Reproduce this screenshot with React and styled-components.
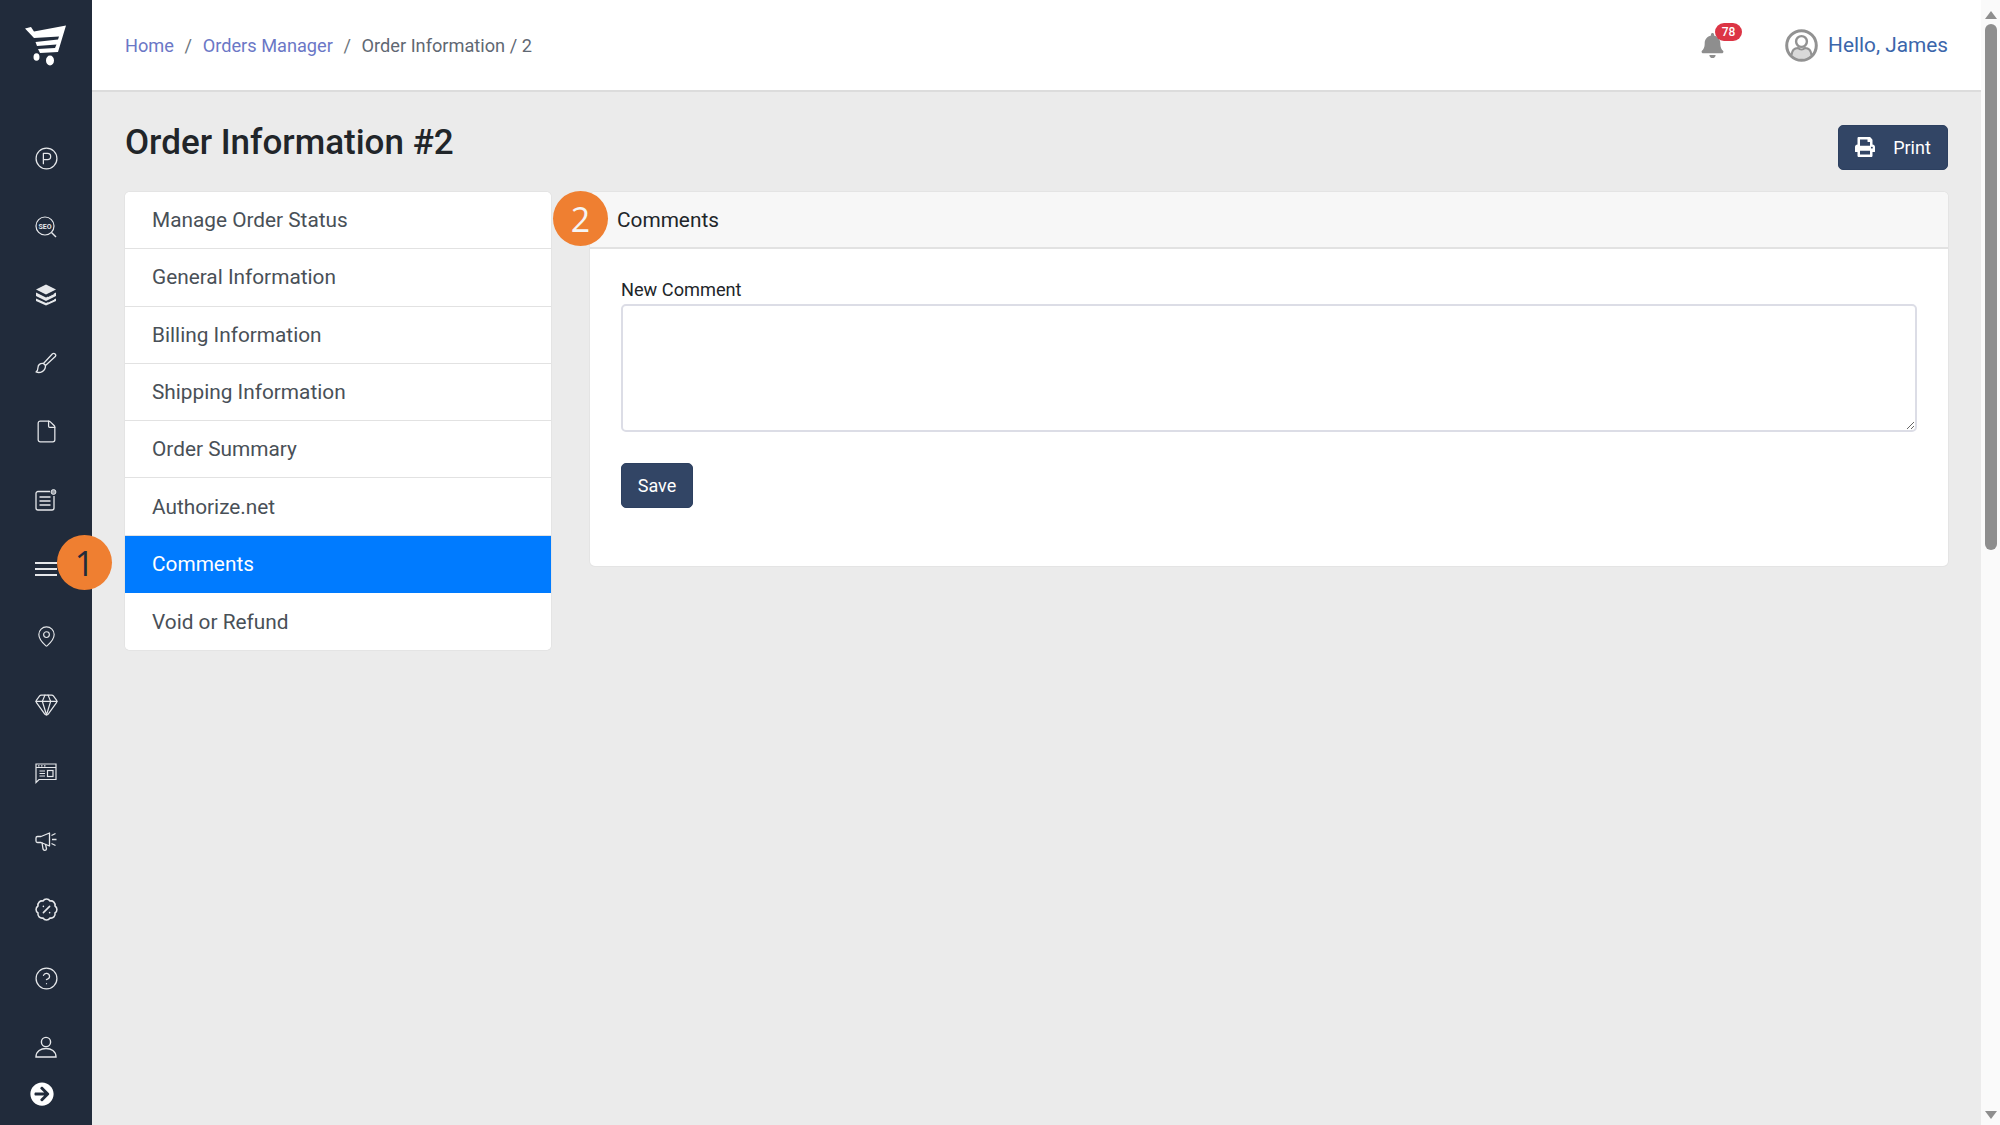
import styled, { createGlobalStyle } from "styled-components";
import { CircleParking, File, MapPin, Gem, BadgePercent, CircleHelp } from "lucide-react";
import { FaArrowCircleRight, FaBell, FaPrint } from "react-icons/fa";

const GlobalStyle = createGlobalStyle`
  html, body {
    margin: 0;
    padding: 0;
    overflow: hidden;
  }
  body {
    font-family: Roboto, "Liberation Sans", sans-serif;
    color: #212529;
  }
  * {
    box-sizing: border-box;
  }
`;

const Page = styled.div`
  display: flex;
  width: 2000px;
  height: 1125px;
  overflow: hidden;
  background: #ebebeb;
`;

const Sidebar = styled.aside`
  position: relative;
  flex: 0 0 92px;
  display: flex;
  flex-direction: column;
  align-items: center;
  background: #212b3b;
  color: #e6e8eb;
`;

const Logo = styled.div`
  height: 90px;
  display: flex;
  align-items: center;
  justify-content: center;
  width: 100%;
`;

const SideNav = styled.nav`
  display: flex;
  flex-direction: column;
  margin-top: 34px;
`;

const SideItem = styled.div`
  height: 68.35px;
  width: 92px;
  display: flex;
  align-items: center;
  justify-content: center;
  color: #e6e8eb;
`;

const Collapse = styled.div`
  display: flex;
  color: #fff;
  margin: 1px 8px 0 0;
`;

const Main = styled.div`
  position: relative;
  flex: 1;
  min-width: 0;
  display: flex;
  flex-direction: column;
`;

const Header = styled.header`
  height: 92px;
  flex: none;
  background: #fff;
  border-bottom: 2px solid #dcdcdc;
  display: flex;
  align-items: center;
  justify-content: space-between;
  padding: 0 33px;
`;

const Crumbs = styled.div`
  display: flex;
  align-items: center;
  font-size: 18.2px;
  color: #5f6873;
`;

const Crumb = styled.a`
  color: #6b77c6;
  text-decoration: none;
`;

const Slash = styled.span`
  margin: 0 10.6px;
  color: #6c757d;
`;

const HeaderRight = styled.div`
  display: flex;
  align-items: center;
`;

const Bell = styled.div`
  position: relative;
  display: flex;
  color: #8e8e8e;
  margin: 0 60px 0 0;
`;

const CountBadge = styled.span`
  position: absolute;
  top: -10px;
  left: 15px;
  width: 27px;
  height: 18px;
  border-radius: 9px;
  background: #dc3545;
  color: #fff;
  font-size: 12px;
  font-weight: 500;
  display: flex;
  align-items: center;
  justify-content: center;
`;

const Hello = styled.div`
  display: flex;
  align-items: center;
  gap: 10px;
  font-size: 20.8px;
  color: #3b66ab;
`;

const Content = styled.main`
  padding: 26px 33px 0;
`;

const TitleRow = styled.div`
  display: flex;
  justify-content: space-between;
  align-items: flex-start;
  height: 74px;
`;

const Title = styled.h1`
  margin: 1px 0 0;
  font-size: 35px;
  line-height: 48px;
  font-weight: 500;
  color: #212529;
`;

const Button = styled.button`
  display: flex;
  align-items: center;
  justify-content: center;
  border: 1px solid #2d4060;
  border-radius: 5px;
  background: #324565;
  color: #fff;
  font-family: inherit;
  font-size: 18px;
  height: 45px;
  padding: 0 16px 1px;
`;

const PrintButton = styled(Button)`
  gap: 18px;
  width: 110px;
  margin-top: 7px;
`;

const Columns = styled.div`
  display: flex;
  align-items: flex-start;
  gap: 39px;
`;

const TabList = styled.ul`
  flex: 0 0 426px;
  margin: 0;
  padding: 0;
  list-style: none;
  background: #fff;
  box-shadow: 0 0 0 1px #e4e4e4;
  border-radius: 5px;
  overflow: hidden;
`;

const Tab = styled.li`
  height: 57.3px;
  display: flex;
  align-items: center;
  padding-left: 27px;
  font-size: 20.8px;
  color: ${(p) => (p.$active ? "#fff" : "#495057")};
  background: ${(p) => (p.$active ? "#007bff" : "#fff")};
  border-bottom: 1px solid ${(p) => (p.$active ? "#007bff" : "#e2e2e2")};
  &:last-child {
    border-bottom: none;
  }
`;

const Card = styled.section`
  flex: 1;
  background: #fff;
  box-shadow: 0 0 0 1px #e4e4e4;
  border-radius: 5px;
  overflow: hidden;
`;

const CardHeader = styled.div`
  height: 57px;
  display: flex;
  align-items: center;
  padding-left: 27px;
  background: #f7f7f7;
  border-bottom: 2px solid #e2e2e2;
  font-size: 20.8px;
  color: #212529;
`;

const CardBody = styled.div`
  padding: 28px 31px 58px;
`;

const Label = styled.label`
  display: block;
  font-size: 18.2px;
  line-height: 25px;
  color: #212529;
`;

const Comment = styled.textarea`
  display: block;
  width: 100%;
  height: 128px;
  margin: 2px 0 31px;
  border: 2px solid #dcdde6;
  border-radius: 5px;
  background: #fff;
  outline: none;
`;

const SaveButton = styled(Button)`
  width: 72px;
  padding: 0 0 1px;
`;

const Step = styled.span`
  position: absolute;
  width: 55px;
  height: 55px;
  border-radius: 50%;
  background: #ef7f31;
  color: ${(p) => p.$ink};
  font-family: "Open Sans", sans-serif;
  font-size: 34px;
  display: flex;
  align-items: center;
  justify-content: center;
  z-index: 5;
`;

const StepOne = styled(Step)`
  left: 57px;
  top: 535px;
`;

const StepTwo = styled(Step)`
  left: 553px;
  top: 191px;
`;

const ScrollTrack = styled.div`
  flex: 0 0 19px;
  display: flex;
  flex-direction: column;
  align-items: center;
  background: #fafafa;
`;

const Arrow = styled.span`
  flex: none;
  margin: ${(p) => (p.$down ? "auto 0 6px" : "11px 0 5px")};
  width: 0;
  height: 0;
  border-left: 6px solid transparent;
  border-right: 6px solid transparent;
  border-bottom: ${(p) => (p.$down ? "none" : "8px solid #8e8e8e")};
  border-top: ${(p) => (p.$down ? "8px solid #8e8e8e" : "none")};
`;

const Thumb = styled.div`
  width: 12px;
  height: 526px;
  border-radius: 6px;
  background: #8e8e8e;
`;

const CartLogo = () => (
  <svg width="42" height="42" viewBox="0 0 42 42" fill="#fff">
    <path d="M0 4.5 L6 3 L9 7.5 L41 1.5 L33 28 L15 29 L13 25 L30 24 L31.5 20.5 L12 22 L10.5 18 L33 15.5 L34 12.5 L9 14 Z" />
    <ellipse cx="11.5" cy="33" rx="3" ry="3.8" />
    <ellipse cx="25" cy="36.5" rx="4" ry="5" />
  </svg>
);

const SeoIcon = () => (
  <svg width="22" height="22" viewBox="0 0 22 22" fill="none" stroke="currentColor">
    <circle cx="10" cy="10" r="9" strokeWidth="1.2" />
    <path d="M16.5 16.5 L21 21" strokeWidth="1.4" />
    <text x="10" y="12.5" textAnchor="middle" fontFamily="Roboto" fontSize="7" fontWeight="700" fill="currentColor" stroke="none">
      SEO
    </text>
  </svg>
);

const StackIcon = () => (
  <svg width="22" height="22" viewBox="0 0 22 22" fill="currentColor">
    <path d="M11 0.5 L21 5.5 L11 10.5 L1 5.5 Z" />
    <path d="M1 8.5 L11 13.5 L21 8.5 V12 L11 17 L1 12 Z" />
    <path d="M1 14.5 L11 19 L21 14.5 V17 L11 21.5 L1 17 Z" />
    <path d="M13 12.5 L19 9.6 M13 18 L19 15.2" stroke="#212b3b" strokeWidth="1" />
  </svg>
);

const BrushIcon = () => (
  <svg width="22" height="22" viewBox="0 0 22 22" fill="none" stroke="currentColor" strokeWidth="1.3" strokeLinejoin="round">
    <path d="M8.5 11.5 L17.5 1.8 a2 2 0 0 1 2.8 2.8 L10.5 13.5 Z" />
    <path d="M8.5 11.5 C5 11 3 13 3 15.5 C3 17.5 2.5 19 1 20 C5 21.5 10.5 19.5 10.5 13.5" />
  </svg>
);

const NoteIcon = () => (
  <svg width="22" height="22" viewBox="0 0 22 22" fill="none" stroke="currentColor" strokeWidth="1.3">
    <path d="M15 2.5 H3 a2 2 0 0 0 -2 2 V19 a2 2 0 0 0 2 2 H17 a2 2 0 0 0 2 -2 V7" />
    <path d="M4.5 8 H15.5 M4.5 12 H15.5 M4.5 16 H15.5" strokeWidth="1.5" />
    <circle cx="18.5" cy="3" r="2.4" fill="#9aa0a8" strokeWidth="1" />
  </svg>
);

const BarsIcon = () => (
  <svg width="22" height="18" viewBox="0 0 22 18" fill="none" stroke="currentColor" strokeWidth="1.8">
    <path d="M0 4 H22 M0 10 H22 M0 16 H22" />
  </svg>
);

const PageIcon = () => (
  <svg width="22" height="22" viewBox="0 0 22 22" fill="none" stroke="currentColor" strokeWidth="1.2">
    <path d="M1 2 H21 V17.5 H4 L1 20.5 Z" />
    <path d="M1 5.5 H21 M4.5 9 H10 M4.5 11.5 H10 M4.5 14 H10" />
    <rect x="12.5" y="8.5" width="5.5" height="6" />
    <path d="M3 3.8 H4.5 M6 3.8 H7.5 M9 3.8 H10.5" />
  </svg>
);

const HornIcon = () => (
  <svg width="22" height="22" viewBox="0 0 22 22" fill="none" stroke="currentColor" strokeWidth="1.3" strokeLinejoin="round">
    <path d="M14.5 2 L6 5.5 H2.5 A1.5 1.5 0 0 0 1 7 V10 A1.5 1.5 0 0 0 2.5 11.5 H6 L14.5 15 Z" />
    <path d="M7 11.5 L8 18 a1.8 1.8 0 0 0 3.5 -0.2 L10.5 13" />
    <path d="M17 8.5 H21.5 M16.5 4.5 L20.5 2.5 M16.5 12.5 L20.5 14.5" />
  </svg>
);

const PersonIcon = () => (
  <svg width="22" height="22" viewBox="0 0 22 22" fill="none" stroke="currentColor" strokeWidth="1.4">
    <circle cx="11" cy="6" r="4.6" />
    <path d="M1 21 H21 C21 15 16 12.5 11 12.5 C6 12.5 1 15 1 21 Z" />
  </svg>
);

const AvatarIcon = () => (
  <svg width="33" height="33" viewBox="0 0 33 33">
    <circle cx="16.5" cy="16.5" r="14.8" fill="#fff" stroke="#929292" strokeWidth="3" />
    <circle cx="16.5" cy="12.5" r="5.4" fill="#fff" stroke="#929292" strokeWidth="2.4" />
    <path d="M6 26 C7 20.5 11 19.5 13 19.5 C15 21 18 21 20 19.5 C22 19.5 26 20.5 27 26 L27 27 C22 31 11 31 6 27 Z" fill="#929292" opacity="0.35" />
    <path d="M6.5 26 C7 21 10 19 13 19 C15 20.8 18 20.8 20 19 C23 19 26 21 26.5 26" fill="none" stroke="#929292" strokeWidth="2.2" />
  </svg>
);

const lucideProps = { size: 25, strokeWidth: 1.2 };

const sideIcons = [
  <CircleParking key="parking" {...lucideProps} />,
  <SeoIcon key="seo" />,
  <StackIcon key="stack" />,
  <BrushIcon key="brush" />,
  <File key="file" {...lucideProps} />,
  <NoteIcon key="note" />,
  <BarsIcon key="bars" />,
  <MapPin key="pin" size={23} strokeWidth={1.2} />,
  <Gem key="gem" {...lucideProps} />,
  <PageIcon key="page" />,
  <HornIcon key="megaphone" />,
  <BadgePercent key="percent" size={25} strokeWidth={1.5} />,
  <CircleHelp key="help" {...lucideProps} />,
  <PersonIcon key="person" />,
];

const tabs = [
  "Manage Order Status",
  "General Information",
  "Billing Information",
  "Shipping Information",
  "Order Summary",
  "Authorize.net",
  "Comments",
  "Void or Refund",
];

export default function App() {
  return (
    <Page>
      <GlobalStyle />
      <Sidebar>
        <Logo>
          <CartLogo />
        </Logo>
        <SideNav>
          {sideIcons.map((icon) => (
            <SideItem key={icon.key}>{icon}</SideItem>
          ))}
        </SideNav>
        <Collapse>
          <FaArrowCircleRight size={24} />
        </Collapse>
        <StepOne $ink="#212b3b">1</StepOne>
      </Sidebar>
      <Main>
        <Header>
          <Crumbs>
            <Crumb href="#">Home</Crumb>
            <Slash>/</Slash>
            <Crumb href="#">Orders Manager</Crumb>
            <Slash>/</Slash>
            <span>Order Information / 2</span>
          </Crumbs>
          <HeaderRight>
            <Bell>
              <FaBell size={25} />
              <CountBadge>78</CountBadge>
            </Bell>
            <Hello>
              <AvatarIcon />
              Hello, James
            </Hello>
          </HeaderRight>
        </Header>
        <Content>
          <TitleRow>
            <Title>Order Information #2</Title>
            <PrintButton>
              <FaPrint size={20} />
              Print
            </PrintButton>
          </TitleRow>
          <Columns>
            <TabList>
              {tabs.map((tab) => (
                <Tab key={tab} $active={tab === "Comments"}>
                  {tab}
                </Tab>
              ))}
            </TabList>
            <Card>
              <CardHeader>Comments</CardHeader>
              <CardBody>
                <Label htmlFor="comment">New Comment</Label>
                <Comment id="comment" />
                <SaveButton>Save</SaveButton>
              </CardBody>
            </Card>
          </Columns>
        </Content>
      </Main>
      <StepTwo $ink="#f5f5f5">2</StepTwo>
      <ScrollTrack>
        <Arrow />
        <Thumb />
        <Arrow $down />
      </ScrollTrack>
    </Page>
  );
}
